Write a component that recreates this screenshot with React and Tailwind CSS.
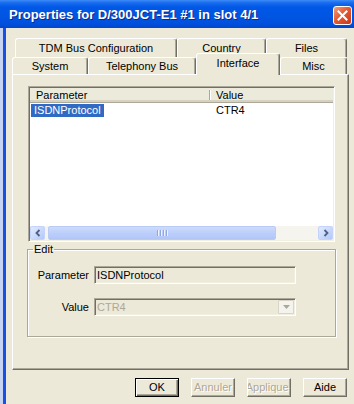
export default function App() {
  const backTab =
    "h-full flex items-center justify-center bg-[#ECE9D8] border-t border-l border-r border-t-white border-l-white border-r-[#716F64] rounded-t-[3px] shadow-[inset_-1px_0_0_#ACA899]";
  const btn =
    "w-[44px] h-[19px] flex items-center justify-center overflow-hidden whitespace-nowrap bg-[#ECE9D8] border border-t-white border-l-white border-r-[#716F64] border-b-[#716F64] shadow-[inset_-1px_-1px_0_#ACA899]";
  const sunken =
    "border border-t-[#ACA899] border-l-[#ACA899] border-r-white border-b-white shadow-[inset_1px_1px_0_#716F64,inset_-1px_-1px_0_#F1EFE2]";
  const sbBtn =
    "w-[15px] h-full rounded-[2px] border border-[#C3D3FD] bg-[linear-gradient(135deg,#E2EAFE_0%,#CBDAFC_50%,#B4C8F6_100%)] flex items-center justify-center";

  return (
    <div className="w-[354px] h-[404px] overflow-hidden bg-[#ECE9D8] flex flex-col text-[11px] leading-[13px] text-black font-['Liberation_Sans',Arial,sans-serif]">
      {/* Title bar */}
      <div className="h-[28px] shrink-0 flex items-center pl-[9px] pr-[2px] pt-[2px] bg-[linear-gradient(180deg,#3D8DF7_0%,#1A6CF0_10%,#0058E6_25%,#0055E3_60%,#0050DC_85%,#0046CC_100%)]">
        <span className="flex-1 text-white font-bold text-[13px] leading-[16px] whitespace-nowrap [text-shadow:1px_1px_0_#0A2A8A]">
          Properties for D/300JCT-E1 #1 in slot 4/1
        </span>
        <div className="w-[19px] h-[19px] rounded-[3px] border border-white bg-[linear-gradient(135deg,#F0A080_0%,#E45A32_45%,#C8381A_100%)] flex items-center justify-center">
          <svg width="11" height="11" viewBox="0 0 11 11">
            <path d="M1.5 1.5 L9.5 9.5 M9.5 1.5 L1.5 9.5" stroke="#fff" strokeWidth="2" strokeLinecap="square" />
          </svg>
        </div>
      </div>

      {/* Body */}
      <div className="flex-1 flex">
        <div className="w-[3px] bg-[#C6D3F2]" />
        <div className="w-[3px] bg-[#1652E2]" />
        <div className="flex-1 flex flex-col pt-[10px] pl-[6px]">
          {/* Tab rows */}
          <div className="flex h-[19px] ml-[3px]">
            <div className={`${backTab} w-[162px]`}>TDM Bus Configuration</div>
            <div className={`${backTab} w-[89px]`}>Country</div>
            <div className={`${backTab} w-[81px]`}>Files</div>
          </div>
          <div className="flex items-end h-[17px]">
            <div className={`${backTab} w-[76px]`}>System</div>
            <div className={`${backTab} w-[108px]`}>Telephony Bus</div>
            <div className="w-[84px] h-[22px] -mb-px relative z-10 flex items-center justify-center pb-[2px] bg-[#ECE9D8] border-t border-l border-r border-t-white border-l-white border-r-[#716F64] rounded-t-[3px] shadow-[inset_-1px_0_0_#ACA899]">
              Interface
            </div>
            <div className={`${backTab} w-[67px]`}>Misc</div>
          </div>

          {/* Panel */}
          <div className="w-[337px] h-[296px] shrink-0 flex flex-col pt-[11px] pl-[15px] border border-t-white border-l-white border-r-[#716F64] border-b-[#716F64] shadow-[inset_-1px_-1px_0_#ACA899]">
            {/* List view */}
            <div className={`w-[307px] h-[156px] flex flex-col bg-white p-px ${sunken}`}>
              <div className="h-[15px] flex items-center bg-[#EBEADB] border-b border-[#ACA899] shadow-[inset_0_-2px_0_#D6D2C2]">
                <div className="w-[179px] pl-[6px]">Parameter</div>
                <div className="w-px h-[10px] bg-[#ACA899] shadow-[1px_0_0_#fff]" />
                <div className="pl-[6px]">Value</div>
              </div>
              <div className="h-[13px] mt-px flex items-center">
                <div className="w-[179px] pl-px">
                  <span className="inline-block px-[3px] bg-[#316AC5] text-white leading-[13px]">ISDNProtocol</span>
                </div>
                <div className="pl-[7px]">CTR4</div>
              </div>
              <div className="flex-1" />
              {/* Scrollbar */}
              <div className="h-[14px] flex bg-[#F5F4EF]">
                <div className={sbBtn}>
                  <svg width="6" height="8" viewBox="0 0 6 8">
                    <path d="M4.5 1 L1.5 4 L4.5 7" stroke="#4D6185" strokeWidth="1.8" fill="none" />
                  </svg>
                </div>
                <div className="flex-1 pl-[3px] flex">
                  <div className="w-[228px] h-full rounded-[2px] border border-[#B9CBF5] bg-[linear-gradient(180deg,#CDDBFD_0%,#BCCFFB_50%,#B2C6F6_100%)] flex items-center justify-center gap-px">
                    <div className="w-px h-[6px] bg-[#8DA6E4] shadow-[1px_0_0_#EEF3FE]" />
                    <div className="w-px h-[6px] bg-[#8DA6E4] shadow-[1px_0_0_#EEF3FE] ml-px" />
                    <div className="w-px h-[6px] bg-[#8DA6E4] shadow-[1px_0_0_#EEF3FE] ml-px" />
                    <div className="w-px h-[6px] bg-[#8DA6E4] shadow-[1px_0_0_#EEF3FE] ml-px" />
                  </div>
                </div>
                <div className={sbBtn}>
                  <svg width="6" height="8" viewBox="0 0 6 8">
                    <path d="M1.5 1 L4.5 4 L1.5 7" stroke="#4D6185" strokeWidth="1.8" fill="none" />
                  </svg>
                </div>
              </div>
            </div>

            {/* Edit group */}
            <fieldset className="mt-[1px] -ml-px w-[309px] border border-[#ACA899] shadow-[inset_1px_1px_0_#fff,1px_1px_0_#fff] pt-[10px] pb-[20px] px-0">
              <legend className="ml-[5px] px-px leading-[13px]">Edit</legend>
              <div className="flex items-center h-[18px]">
                <div className="w-[61px] text-right">Parameter</div>
                <div className={`ml-[5px] w-[202px] h-[18px] flex items-center pl-[2px] bg-[#ECE9D8] ${sunken}`}>ISDNProtocol</div>
              </div>
              <div className="flex items-center h-[18px] mt-[14px]">
                <div className="w-[61px] text-right">Value</div>
                <div className={`ml-[5px] w-[202px] h-[18px] flex items-center pl-[2px] pr-px bg-[#ECE9D8] ${sunken}`}>
                  <span className="flex-1 text-[#ACA899]">CTR4</span>
                  <div className="w-[16px] h-[14px] rounded-[1px] border border-[#D8D5C6] bg-[#F4F3EE] flex items-center justify-center">
                    <svg width="7" height="4" viewBox="0 0 7 4">
                      <path d="M0 0 L7 0 L3.5 4 Z" fill="#ACA899" />
                    </svg>
                  </div>
                </div>
              </div>
            </fieldset>
          </div>

          {/* Buttons */}
          <div className="mt-[8px] flex justify-end gap-[12px] pr-[7px]">
            <div className="w-[44px] h-[19px] flex items-center justify-center bg-[#ECE9D8] border border-black shadow-[inset_1px_1px_0_#fff,inset_-1px_-1px_0_#716F64,inset_-2px_-2px_0_#ACA899]">
              OK
            </div>
            <div className={`${btn} text-[#ACA899] [text-shadow:1px_1px_0_#fff]`}>Annuler</div>
            <div className={`${btn} text-[#ACA899] [text-shadow:1px_1px_0_#fff]`}>Appliquer</div>
            <div className={btn}>Aide</div>
          </div>
        </div>
      </div>
    </div>
  );
}
